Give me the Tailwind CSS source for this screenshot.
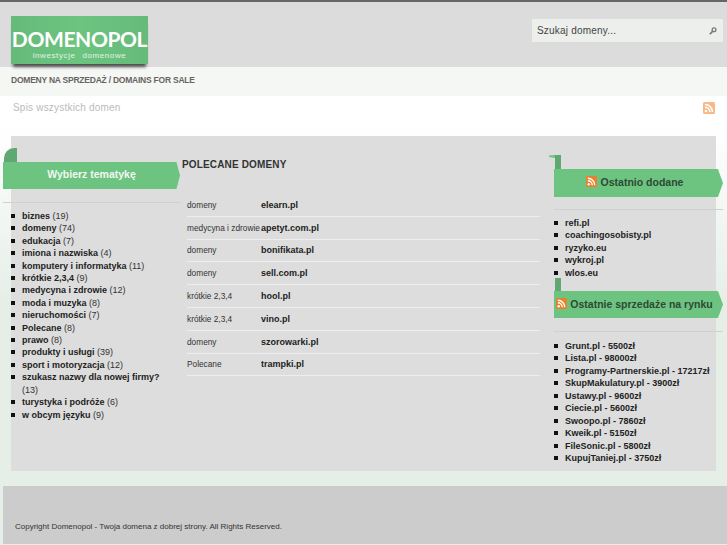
<!DOCTYPE html>
<html lang="pl"><head><meta charset="utf-8"><script src="https://cdn.jsdelivr.net/npm/@tailwindcss/browser@4"></script></head>
<body class="h-[545px] w-[727px] overflow-hidden bg-gradient-to-b from-white from-[125px] to-[#e5efe8] to-[300px] font-['Liberation_Sans',sans-serif]">
<header class="relative z-10 flex h-[67px] items-start justify-between border-t-2 border-[#666] bg-[#dcdcdc] pl-[11px] pr-[4px] pt-[14px]">
  <div class="relative h-[48px] w-[137px] bg-[#6cc480] shadow-[0_5px_3px_-2px_rgba(0,0,0,0.65)]">
    <div class="absolute inset-0 bg-gradient-to-r from-black/5 via-transparent to-black/5"></div>
    <div class="relative flex h-full flex-col items-center pt-[13px] text-white">
      <span class="font-['Lato',sans-serif] text-[21px] font-bold leading-[19px] tracking-[-0.4px]">DOMENOPOL</span>
      <span class="mt-[3px] text-[8px] leading-[10px] tracking-[0.6px] text-white/80 [word-spacing:4px]">inwestycje domenowe</span>
    </div>
  </div>
  <div class="mt-[3px] flex h-[23px] w-[191px] items-center justify-between bg-[#ecefec] pl-[5px] pr-[6px]">
    <span class="text-[10px] tracking-[0.2px] text-[#444]">Szukaj domeny...</span>
    <svg width="8" height="8" viewBox="0 0 10 10" fill="none" stroke="#777" stroke-width="1.6"><circle cx="6.3" cy="3.5" r="2.4"/><path d="M4.5 5.4 1 9" stroke-width="2"/></svg>
  </div>
</header>
<nav class="flex h-[29px] items-center bg-[#f4f7f4] pb-[3px] pl-[11px] text-[8.5px] font-bold tracking-[-0.23px] text-[#6a6461]">DOMENY NA SPRZEDAŻ / DOMAINS FOR SALE</nav>
<div class="flex h-[40px] items-start justify-between pl-[13px] pr-[12px] pt-[6px]">
  <span class="text-[10px] leading-[12px] tracking-[0.2px] text-[#bbb]">Spis wszystkich domen</span>
  <svg width="12" height="12" viewBox="0 0 12 12"><rect width="12" height="12" rx="1.5" fill="#f8b98a"/><circle cx="3" cy="9" r="1.3" fill="#fff"/><path d="M2 5.2A4.8 4.8 0 0 1 6.8 10M2 2.5A7.5 7.5 0 0 1 9.5 10" fill="none" stroke="#fff" stroke-width="1.5"/></svg>
</div>
<main class="ml-[11px] h-[335px] w-[705px] bg-[#ddd]">
  <div class="flex items-start">
    <aside class="-ml-[8px] w-[177px] shrink-0 pt-[12px]">
      <div class="ml-[1px] h-[14px] w-[13px] rounded-tl-[10px] bg-[#5fa871]"></div>
      <div class="flex h-[27px] items-center justify-center bg-[#6cc480] pb-[1px] text-[10.5px] font-bold text-[#f2f7f2] [clip-path:polygon(0_0,98%_0,100%_50%,98%_100%,0_100%)]">Wybierz tematykę</div>
      <div class="mt-[13px] border-t border-[#d0d0d0] pl-[8px] pt-[7px]">
        <ul class="w-[165px] list-none text-[9px] leading-[12.4px] text-[#333]">
          <li class="relative pl-[11px] before:absolute before:left-0 before:top-[4px] before:size-[4px] before:bg-[#111]"><b class="text-[#222]">biznes</b> (19)</li>
          <li class="relative pl-[11px] before:absolute before:left-0 before:top-[4px] before:size-[4px] before:bg-[#111]"><b class="text-[#222]">domeny</b> (74)</li>
          <li class="relative pl-[11px] before:absolute before:left-0 before:top-[4px] before:size-[4px] before:bg-[#111]"><b class="text-[#222]">edukacja</b> (7)</li>
          <li class="relative pl-[11px] before:absolute before:left-0 before:top-[4px] before:size-[4px] before:bg-[#111]"><b class="text-[#222]">imiona i nazwiska</b> (4)</li>
          <li class="relative pl-[11px] before:absolute before:left-0 before:top-[4px] before:size-[4px] before:bg-[#111]"><b class="text-[#222]">komputery i informatyka</b> (11)</li>
          <li class="relative pl-[11px] before:absolute before:left-0 before:top-[4px] before:size-[4px] before:bg-[#111]"><b class="text-[#222]">krótkie 2,3,4</b> (9)</li>
          <li class="relative pl-[11px] before:absolute before:left-0 before:top-[4px] before:size-[4px] before:bg-[#111]"><b class="text-[#222]">medycyna i zdrowie</b> (12)</li>
          <li class="relative pl-[11px] before:absolute before:left-0 before:top-[4px] before:size-[4px] before:bg-[#111]"><b class="text-[#222]">moda i muzyka</b> (8)</li>
          <li class="relative pl-[11px] before:absolute before:left-0 before:top-[4px] before:size-[4px] before:bg-[#111]"><b class="text-[#222]">nieruchomości</b> (7)</li>
          <li class="relative pl-[11px] before:absolute before:left-0 before:top-[4px] before:size-[4px] before:bg-[#111]"><b class="text-[#222]">Polecane</b> (8)</li>
          <li class="relative pl-[11px] before:absolute before:left-0 before:top-[4px] before:size-[4px] before:bg-[#111]"><b class="text-[#222]">prawo</b> (8)</li>
          <li class="relative pl-[11px] before:absolute before:left-0 before:top-[4px] before:size-[4px] before:bg-[#111]"><b class="text-[#222]">produkty i usługi</b> (39)</li>
          <li class="relative pl-[11px] before:absolute before:left-0 before:top-[4px] before:size-[4px] before:bg-[#111]"><b class="text-[#222]">sport i motoryzacja</b> (12)</li>
          <li class="relative w-[150px] pl-[11px] before:absolute before:left-0 before:top-[4px] before:size-[4px] before:bg-[#111]"><b class="text-[#222]">szukasz nazwy dla nowej firmy?</b> (13)</li>
          <li class="relative pl-[11px] before:absolute before:left-0 before:top-[4px] before:size-[4px] before:bg-[#111]"><b class="text-[#222]">turystyka i podróże</b> (6)</li>
          <li class="relative pl-[11px] before:absolute before:left-0 before:top-[4px] before:size-[4px] before:bg-[#111]"><b class="text-[#222]">w obcym języku</b> (9)</li>
        </ul>
      </div>
    </aside>
    <section class="ml-[2px] w-[358px] shrink-0 pt-[22px]">
      <h2 class="text-[10px] font-bold leading-[13px] tracking-[0.15px] text-[#333]">POLECANE DOMENY</h2>
      <div class="ml-[5px] mt-[23px] text-[#333]">
        <div class="flex h-[22.8px] items-center whitespace-nowrap border-b border-[#eee] leading-[12px]"><span class="w-[74px] text-[8.3px]">domeny</span><b class="text-[9px] text-[#222]">elearn.pl</b></div>
        <div class="flex h-[22.8px] items-center whitespace-nowrap border-b border-[#eee] leading-[12px]"><span class="w-[74px] text-[8.3px]">medycyna i zdrowie</span><b class="text-[9px] text-[#222]">apetyt.com.pl</b></div>
        <div class="flex h-[22.8px] items-center whitespace-nowrap border-b border-[#eee] leading-[12px]"><span class="w-[74px] text-[8.3px]">domeny</span><b class="text-[9px] text-[#222]">bonifikata.pl</b></div>
        <div class="flex h-[22.8px] items-center whitespace-nowrap border-b border-[#eee] leading-[12px]"><span class="w-[74px] text-[8.3px]">domeny</span><b class="text-[9px] text-[#222]">sell.com.pl</b></div>
        <div class="flex h-[22.8px] items-center whitespace-nowrap border-b border-[#eee] leading-[12px]"><span class="w-[74px] text-[8.3px]">krótkie 2,3,4</span><b class="text-[9px] text-[#222]">hool.pl</b></div>
        <div class="flex h-[22.8px] items-center whitespace-nowrap border-b border-[#eee] leading-[12px]"><span class="w-[74px] text-[8.3px]">krótkie 2,3,4</span><b class="text-[9px] text-[#222]">vino.pl</b></div>
        <div class="flex h-[22.8px] items-center whitespace-nowrap border-b border-[#eee] leading-[12px]"><span class="w-[74px] text-[8.3px]">domeny</span><b class="text-[9px] text-[#222]">szorowarki.pl</b></div>
        <div class="flex h-[22.8px] items-center whitespace-nowrap border-b border-[#eee] leading-[12px]"><span class="w-[74px] text-[8.3px]">Polecane</span><b class="text-[9px] text-[#222]">trampki.pl</b></div>
      </div>
    </section>
    <aside class="ml-[14px] w-[169px] shrink-0 pt-[19px]">
      <svg class="-ml-[5px] block" width="12" height="14" viewBox="0 0 12 14"><path d="M0 0.5 6 0V3L0 2Z" fill="#6cc480"/><path d="M6 0H12V14H6Z" fill="#5fa871"/></svg>
      <div class="flex h-[28px] items-center justify-center gap-[4px] bg-[#6cc480] pr-[8px] text-[10.5px] font-bold text-[#2e4a35] [clip-path:polygon(0_0,97%_0,100%_50%,97%_100%,0_100%)]">
        <svg class="mb-[3px]" width="11" height="11" viewBox="0 0 12 12"><rect width="12" height="12" rx="1.5" fill="#e8802c"/><circle cx="3" cy="9" r="1.3" fill="#fff"/><path d="M2 5.2A4.8 4.8 0 0 1 6.8 10M2 2.5A7.5 7.5 0 0 1 9.5 10" fill="none" stroke="#fff" stroke-width="1.5"/></svg>
        Ostatnio dodane</div>
      <div class="mt-[12px] border-t border-[#d0d0d0] pt-[7px]">
        <ul class="text-[9px] font-bold leading-[12.4px] text-[#222]">
          <li class="relative pl-[11px] before:absolute before:left-0 before:top-[4px] before:size-[4px] before:bg-[#111]">refi.pl</li>
          <li class="relative pl-[11px] before:absolute before:left-0 before:top-[4px] before:size-[4px] before:bg-[#111]">coachingosobisty.pl</li>
          <li class="relative pl-[11px] before:absolute before:left-0 before:top-[4px] before:size-[4px] before:bg-[#111]">ryzyko.eu</li>
          <li class="relative pl-[11px] before:absolute before:left-0 before:top-[4px] before:size-[4px] before:bg-[#111]">wykroj.pl</li>
          <li class="relative pl-[11px] before:absolute before:left-0 before:top-[4px] before:size-[4px] before:bg-[#111]">wlos.eu</li>
        </ul>
      </div>
      <div class="-mt-[1px] ml-[1px] h-[13px] w-[6px] bg-[#5fa871]"></div>
      <div class="flex h-[27px] items-center justify-center gap-[3px] bg-[#6cc480] pr-[8px] text-[10.5px] font-bold text-[#2e4a35] [clip-path:polygon(0_0,97%_0,100%_50%,97%_100%,0_100%)]">
        <svg class="mb-[3px]" width="11" height="11" viewBox="0 0 12 12"><rect width="12" height="12" rx="1.5" fill="#e8802c"/><circle cx="3" cy="9" r="1.3" fill="#fff"/><path d="M2 5.2A4.8 4.8 0 0 1 6.8 10M2 2.5A7.5 7.5 0 0 1 9.5 10" fill="none" stroke="#fff" stroke-width="1.5"/></svg>
        Ostatnie sprzedaże na rynku</div>
      <div class="mt-[13px] border-t border-[#d0d0d0] pt-[8px]">
        <ul class="text-[9px] font-bold leading-[12.45px] text-[#222]">
          <li class="relative pl-[11px] before:absolute before:left-0 before:top-[4px] before:size-[4px] before:bg-[#111]">Grunt.pl - 5500zł</li>
          <li class="relative pl-[11px] before:absolute before:left-0 before:top-[4px] before:size-[4px] before:bg-[#111]">Lista.pl - 98000zł</li>
          <li class="relative pl-[11px] before:absolute before:left-0 before:top-[4px] before:size-[4px] before:bg-[#111]">Programy-Partnerskie.pl - 17217zł</li>
          <li class="relative pl-[11px] before:absolute before:left-0 before:top-[4px] before:size-[4px] before:bg-[#111]">SkupMakulatury.pl - 3900zł</li>
          <li class="relative pl-[11px] before:absolute before:left-0 before:top-[4px] before:size-[4px] before:bg-[#111]">Ustawy.pl - 9600zł</li>
          <li class="relative pl-[11px] before:absolute before:left-0 before:top-[4px] before:size-[4px] before:bg-[#111]">Ciecie.pl - 5600zł</li>
          <li class="relative pl-[11px] before:absolute before:left-0 before:top-[4px] before:size-[4px] before:bg-[#111]">Swoopo.pl - 7860zł</li>
          <li class="relative pl-[11px] before:absolute before:left-0 before:top-[4px] before:size-[4px] before:bg-[#111]">Kweik.pl - 5150zł</li>
          <li class="relative pl-[11px] before:absolute before:left-0 before:top-[4px] before:size-[4px] before:bg-[#111]">FileSonic.pl - 5800zł</li>
          <li class="relative pl-[11px] before:absolute before:left-0 before:top-[4px] before:size-[4px] before:bg-[#111]">KupujTaniej.pl - 3750zł</li>
        </ul>
      </div>
    </aside>
  </div>
</main>
<footer class="ml-[3px] mt-[15px] flex h-[58px] items-end bg-[#ccc] pb-[11px] pl-[12px] text-[8px] text-[#333]">Copyright Domenopol - Twoja domena z dobrej strony. All Rights Reserved.</footer>
</body></html>
